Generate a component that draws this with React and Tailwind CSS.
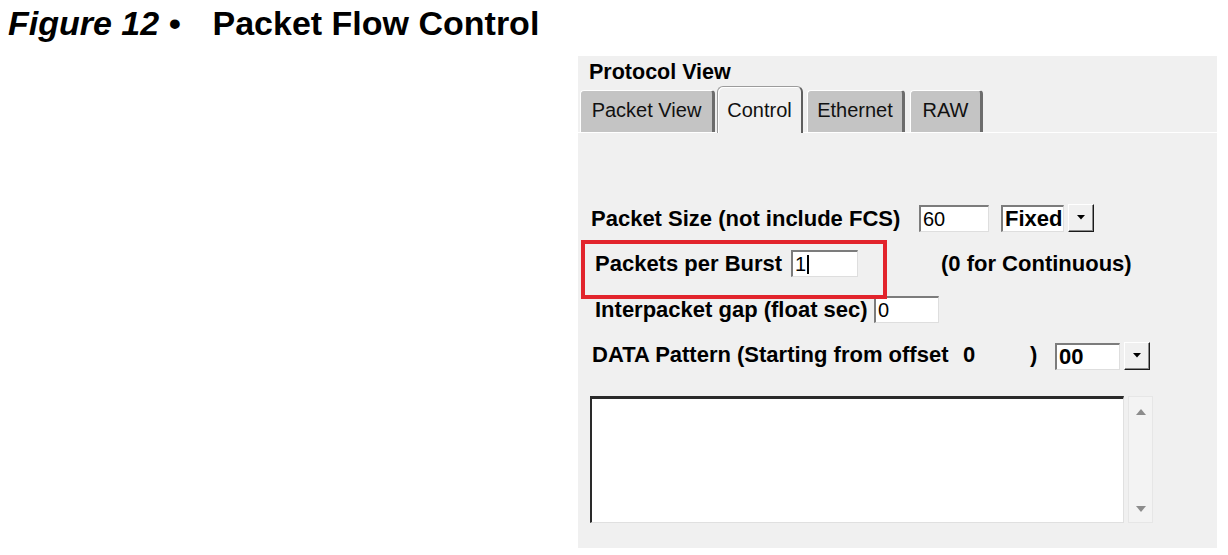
import React from "react";

// sunken white edit field, win9x style
const Field = ({ w, children, bold }) => (
  <div
    className={`${w} h-[27px] bg-white border-t-2 border-l-2 border-t-[#7c7c7c] border-l-[#7c7c7c] border-r border-b border-r-[#dedede] border-b-[#dedede] flex items-center pl-[2px] leading-none ${bold ? "font-bold text-[22px]" : "font-normal text-[20px]"}`}
  >
    {children}
  </div>
);

const DropBtn = () => (
  <div className="w-[26px] h-[28px] bg-[#f0f0f0] border border-t-white border-l-white border-r-[#1a1a1a] border-b-[#1a1a1a] shadow-[inset_-1px_-1px_0_#8a8a8a] flex items-center justify-center pb-[2px]">
    <svg width="8" height="5" viewBox="0 0 8 5">
      <path d="M0 0H8L4 4.5Z" fill="#000" />
    </svg>
  </div>
);

const Tab = ({ label, w, ml, active }) =>
  active ? (
    <div
      className={`${w} ${ml} h-[47px] -mb-px bg-[#f0f0f0] rounded-t-[6px] border-t border-l border-[#9c9c9c] border-r-2 border-r-[#5e5e5e] shadow-[inset_1px_1px_0_#fff] text-center pt-[11px] leading-[24px]`}
    >
      {label}
    </div>
  ) : (
    <div
      className={`${w} ${ml} h-[42px] bg-[#c4c4c4] rounded-t-[4px] border-t border-l border-white border-r-[3px] border-r-[#6c6c6c] text-center pt-[7px] leading-[24px]`}
    >
      {label}
    </div>
  );

export default function App() {
  return (
    <div className="w-[1228px] h-[555px] bg-white text-black font-['Liberation_Sans',Arial,sans-serif] overflow-hidden">
      <h1 className="pl-2 pt-[3px] text-[34px] leading-[40px] font-bold whitespace-nowrap">
        <span className="italic">Figure 12 •</span>
        <span className="ml-[32px]">Packet Flow Control</span>
      </h1>

      <div className="relative ml-[578px] mt-[13px] w-[639px] h-[492px] bg-[#f0f0f0]">
        <div className="pl-[11px] pt-[4px] text-[21.5px] leading-[24px] font-bold">Protocol View</div>

        <div className="mt-[2px] flex items-end h-[47px] border-b border-white text-[20px] text-[#111]">
          <Tab label="Packet View" w="w-[135px]" ml="ml-[2px]" />
          <Tab label="Control" w="w-[86px]" ml="ml-[2px]" active />
          <Tab label="Ethernet" w="w-[98px]" ml="ml-[4px]" />
          <Tab label="RAW" w="w-[73px]" ml="ml-[5px]" />
        </div>

        <div className="text-[22px] leading-[27px] font-bold">
          <div className="mt-[71px] flex items-center pl-[13px] h-[28px]">
            <span className="w-[328px] whitespace-nowrap">Packet Size (not include FCS)</span>
            <Field w="w-[70px]">60</Field>
            <div className="ml-[12px]">
              <Field w="w-[63px]" bold>Fixed</Field>
            </div>
            <div className="ml-[4px]">
              <DropBtn />
            </div>
          </div>

          <div className="mt-[18px] flex items-center pl-[17px] h-[27px]">
            <span className="w-[196px] whitespace-nowrap">Packets per Burst</span>
            <Field w="w-[67px]">
              1<span className="ml-px w-[2px] h-[19px] bg-black" />
            </Field>
            <span className="ml-[83px] whitespace-nowrap">(0 for Continuous)</span>
          </div>

          <div className="mt-[19px] flex items-center pl-[17px] h-[27px]">
            <span className="w-[279px] whitespace-nowrap">Interpacket gap (float sec)</span>
            <Field w="w-[65px]">0</Field>
          </div>

          <div className="mt-[19px] flex items-center pl-[14px] h-[28px]">
            <span className="w-[371px] whitespace-nowrap -mt-[3px]">DATA Pattern (Starting from offset</span>
            <span className="w-[67px] -mt-[3px]">0</span>
            <span className="w-[25px] -mt-[3px]">)</span>
            <Field w="w-[65px]" bold>00</Field>
            <div className="ml-[4px]">
              <DropBtn />
            </div>
          </div>
        </div>

        <div className="mt-[26px] ml-[12px] flex h-[127px]">
          <div className="w-[534px] h-full bg-white border-t-[3px] border-l-2 border-t-[#2a2a2a] border-l-[#2a2a2a] border-r border-b border-r-[#e0e0e0] border-b-[#e0e0e0]" />
          <div className="ml-[4px] w-[25px] h-full bg-[#f3f3f3] border border-[#e6e6e6] flex flex-col items-center justify-between pt-[12px] pb-[10px]">
            <svg width="10" height="6" viewBox="0 0 10 6">
              <path d="M0 6L5 0L10 6Z" fill="#8c8c8c" />
            </svg>
            <svg width="10" height="6" viewBox="0 0 10 6">
              <path d="M0 0H10L5 6Z" fill="#8c8c8c" />
            </svg>
          </div>
        </div>

        <div className="absolute left-[3px] top-[184px] w-[306px] h-[59px] border-4 border-[#e2242c]" />
      </div>
    </div>
  );
}
